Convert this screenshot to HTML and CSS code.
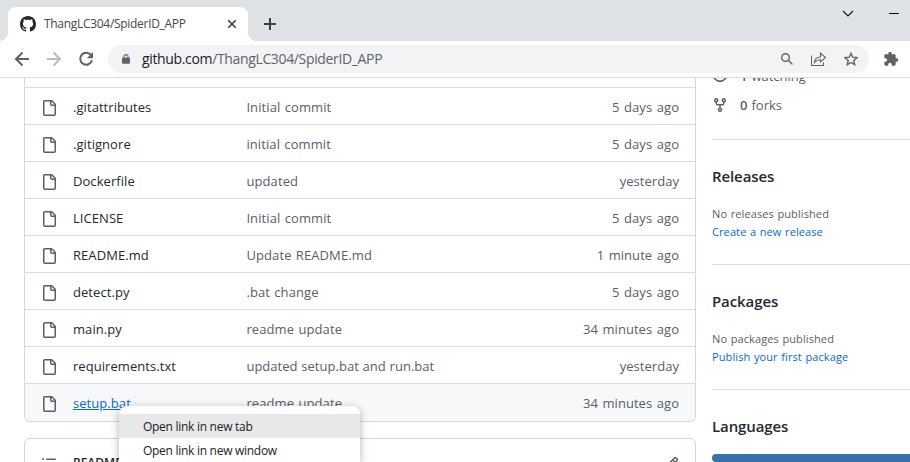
FILE: index.html
```html
<!DOCTYPE html>
<html lang="en">
<head>
<meta charset="utf-8">
<title>ThangLC304/SpiderID_APP</title>
<link rel="stylesheet" href="styles.css">
</head>
<body>
<svg class="defs" aria-hidden="true">
  <symbol id="file" viewBox="0 0 16 16"><path d="M2 1.75C2 .784 2.784 0 3.75 0h6.586c.464 0 .909.184 1.237.513l2.914 2.914c.329.328.513.773.513 1.237v9.586A1.75 1.75 0 0 1 13.25 16h-9.5A1.75 1.75 0 0 1 2 14.25Zm1.75-.25a.25.25 0 0 0-.25.25v12.5c0 .138.112.25.25.25h9.5a.25.25 0 0 0 .25-.25V6h-2.75A1.75 1.75 0 0 1 9 4.25V1.5Zm6.75.062V4.25c0 .138.112.25.25.25h2.688l-.011-.013-2.914-2.914-.013-.011Z"/></symbol>
</svg>
<header class="tabstrip">
  <div class="tab">
    <svg class="mark" viewBox="0 0 16 16"><path d="M8 0c4.42 0 8 3.58 8 8a8.013 8.013 0 0 1-5.45 7.59c-.4.08-.55-.17-.55-.38 0-.27.01-1.13.01-2.2 0-.75-.25-1.23-.54-1.48 1.78-.2 3.65-.88 3.65-3.95 0-.88-.31-1.59-.82-2.15.08-.2.36-1.02-.08-2.12 0 0-.67-.22-2.2.82-.64-.18-1.32-.27-2-.27-.68 0-1.36.09-2 .27-1.53-1.03-2.2-.82-2.2-.82-.44 1.1-.16 1.92-.08 2.12-.51.56-.82 1.28-.82 2.15 0 3.06 1.86 3.75 3.64 3.95-.23.2-.44.55-.51 1.07-.46.21-1.61.55-2.33-.66-.15-.24-.6-.83-1.23-.82-.67.01-.27.38.01.53.34.19.73.9.82 1.13.16.45.68 1.31 2.69.94 0 .67.01 1.3.01 1.49 0 .21-.15.45-.55.38A7.995 7.995 0 0 1 0 8c0-4.42 3.58-8 8-8Z"/></svg>
    <span class="tab-title">ThangLC304/SpiderID_APP</span>
    <svg class="close" viewBox="0 0 10 10"><path d="M1.2 1.2l7.6 7.6M8.8 1.2L1.2 8.8"/></svg>
  </div>
  <svg class="plus" viewBox="0 0 12 12"><path d="M6 0v12M0 6h12"/></svg>
  <div class="window-buttons">
    <svg class="chevron" viewBox="0 0 12 8"><path d="M1 1l5 5 5-5"/></svg>
    <svg class="minimize" viewBox="0 0 10 1"><path d="M0 .5h10"/></svg>
  </div>
</header>
<nav class="toolbar">
  <svg class="nav" viewBox="0 0 16 16"><path d="M15 8H2M8.500 1.500L2 8l6.500 6.500"/></svg>
  <svg class="nav off" viewBox="0 0 16 16"><path d="M1 8h13M7.500 1.500L14 8l-6.500 6.500"/></svg>
  <svg class="nav" viewBox="0 0 16 16"><path d="M13.300 4.500A6 6 0 1 0 14 9.300"/><path class="solid" d="M15 1v6.200H8.800z"/></svg>
  <div class="omnibox">
    <svg class="lock" viewBox="0 0 10 12"><path d="M1 4h8q1 0 1 1v6q0 1-1 1H1q-1 0-1-1V5q0-1 1-1z"/><path class="shackle" d="M2.500 4.500V3a2.500 2.400 0 0 1 5 0v1.500"/></svg>
    <span class="url"><b>github.com</b>/ThangLC304/SpiderID_APP</span>
    <svg class="search" viewBox="0 0 12 12"><circle cx="4.500" cy="4.500" r="3.800"/><path d="M7.300 7.300l4.200 4.200"/></svg>
    <svg class="share" viewBox="0 0 16 14"><path d="M.5 3.500v10h12v-3M3.500 10.500c.2-3.500 2.500-5.500 6-5.500V1.200l5 4.300-5 4.300V7.800c-3 0-4.500.8-6 2.700z"/></svg>
    <svg class="star" viewBox="0 0 14 14"><path d="M7 1.300l1.700 3.900 4.300.4-3.200 2.900.9 4.200L7 10.500l-3.700 2.200.9-4.200L1 5.600l4.300-.4z"/></svg>
  </div>
  <svg class="puzzle" viewBox="0 0 24 24"><path d="M20.500 11H19V7c0-1.100-.9-2-2-2h-4V3.500a2.500 2.500 0 0 0-5 0V5H4c-1.100 0-2 .9-2 2v3.800h1.500a2.700 2.700 0 0 1 0 5.400H2V20c0 1.100.9 2 2 2h3.800v-1.500a2.700 2.700 0 0 1 5.400 0V22H17c1.100 0 2-.9 2-2v-4h1.500a2.500 2.500 0 0 0 0-5z"/></svg>
</nav>
<div class="page">
  <main>
    <div class="files">
      <div class="row cut"></div>
      <div class="row"><svg class="file"><use href="#file"/></svg><a>.gitattributes</a><span class="msg">Initial commit</span><time>5 days ago</time></div>
      <div class="row"><svg class="file"><use href="#file"/></svg><a>.gitignore</a><span class="msg">initial commit</span><time>5 days ago</time></div>
      <div class="row"><svg class="file"><use href="#file"/></svg><a>Dockerfile</a><span class="msg">updated</span><time>yesterday</time></div>
      <div class="row"><svg class="file"><use href="#file"/></svg><a>LICENSE</a><span class="msg">Initial commit</span><time>5 days ago</time></div>
      <div class="row"><svg class="file"><use href="#file"/></svg><a>README.md</a><span class="msg">Update README.md</span><time>1 minute ago</time></div>
      <div class="row"><svg class="file"><use href="#file"/></svg><a>detect.py</a><span class="msg">.bat change</span><time>5 days ago</time></div>
      <div class="row"><svg class="file"><use href="#file"/></svg><a>main.py</a><span class="msg">readme update</span><time>34 minutes ago</time></div>
      <div class="row"><svg class="file"><use href="#file"/></svg><a>requirements.txt</a><span class="msg tight">updated setup.bat and run.bat</span><time>yesterday</time></div>
      <div class="row hover"><svg class="file"><use href="#file"/></svg><a>setup.bat</a><span class="msg">readme update</span><time>34 minutes ago</time></div>
    </div>
    <div class="readme">
      <svg class="list" viewBox="0 0 16 16"><path d="M5.750 2.500h8.500a.75.75 0 0 1 0 1.500h-8.500a.75.75 0 0 1 0-1.500Zm0 5h8.500a.75.75 0 0 1 0 1.500h-8.500a.75.75 0 0 1 0-1.500Zm0 5h8.500a.75.75 0 0 1 0 1.500h-8.500a.75.75 0 0 1 0-1.500ZM2 14a1 1 0 1 1 0-2 1 1 0 0 1 0 2Zm1-6a1 1 0 1 1-2 0 1 1 0 0 1 2 0ZM2 4a1 1 0 1 1 0-2 1 1 0 0 1 0 2Z"/></svg>
      <b>README.md</b>
      <svg class="pencil" viewBox="0 0 16 16"><path d="M11.013 1.427a1.750 1.750 0 0 1 2.474 0l1.086 1.086a1.750 1.750 0 0 1 0 2.474l-8.610 8.610c-.21.21-.47.364-.756.445l-3.251.93a.75.75 0 0 1-.927-.928l.929-3.250c.081-.286.235-.547.445-.758l8.610-8.610Zm.176 4.823L9.750 4.810l-6.286 6.287a.253.253 0 0 0-.064.108l-.558 1.953 1.953-.558a.253.253 0 0 0 .108-.064Zm1.238-3.763a.25.25 0 0 0-.354 0L10.811 3.750l1.439 1.440 1.263-1.263a.25.25 0 0 0 0-.354Z"/></svg>
    </div>
  </main>
  <aside>
    <section class="stats">
      <div class="stat"><svg viewBox="0 0 16 16"><path d="M8 2c1.981 0 3.671.992 4.933 2.078 1.270 1.091 2.187 2.345 2.637 3.023a1.620 1.620 0 0 1 0 1.798c-.45.678-1.367 1.932-2.637 3.023C11.670 13.008 9.981 14 8 14s-3.670-.992-4.933-2.078C1.797 10.830.88 9.576.43 8.898a1.620 1.620 0 0 1 0-1.798c.45-.677 1.367-1.931 2.637-3.022C4.330 2.992 6.019 2 8 2ZM1.679 7.932a.12.12 0 0 0 0 .136c.411.622 1.241 1.750 2.366 2.717C5.176 11.758 6.527 12.500 8 12.500s2.825-.742 3.955-1.715c1.124-.967 1.954-2.096 2.366-2.717a.12.12 0 0 0 0-.136c-.412-.621-1.242-1.750-2.366-2.717C10.824 4.242 9.473 3.500 8 3.500s-2.825.742-3.955 1.715c-1.124.967-1.954 2.096-2.366 2.717ZM8 10a2 2 0 1 1 0-4 2 2 0 0 1 0 4Z"/></svg><b>1</b><span>watching</span></div>
      <div class="stat"><svg viewBox="0 0 16 16"><path d="M5 5.372v.878c0 .414.336.75.75.75h4.500a.75.75 0 0 0 .75-.75v-.878a2.250 2.250 0 1 1 1.500 0v.878a2.250 2.250 0 0 1-2.250 2.250h-1.500v2.128a2.251 2.251 0 1 1-1.500 0V8.500h-1.500A2.250 2.250 0 0 1 3.500 6.250v-.878a2.250 2.250 0 1 1 1.500 0ZM5 3.250a.75.75 0 1 0-1.500 0 .75.75 0 0 0 1.500 0Zm6.750.75a.75.75 0 1 0 0-1.500.75.75 0 0 0 0 1.500Zm-3 8.750a.75.75 0 1 0-1.500 0 .75.75 0 0 0 1.500 0Z"/></svg><b>0</b><span>forks</span></div>
    </section>
    <section class="block"><h2>Releases</h2><p>No releases published</p><a>Create a new release</a></section>
    <section class="block"><h2>Packages</h2><p>No packages published</p><a>Publish your first package</a></section>
    <section class="block last"><h2>Languages</h2><div class="bar"></div></section>
  </aside>
</div>
<div class="menu">
  <div class="item active">Open link in new tab</div>
  <div class="item">Open link in new window</div>
</div>
</body>
</html>
```
FILE: styles.css
```css
* { box-sizing: border-box; }
body {
  margin: 0;
  width: 910px;
  height: 462px;
  overflow: hidden;
  display: flex;
  flex-direction: column;
  background: #fff;
  color: #24292f;
  font: 13px/20px "Open Sans", "Noto Sans", sans-serif;
  white-space: nowrap;
}
svg { flex: none; display: block; }
.defs { position: absolute; width: 0; height: 0; }

.tabstrip { height: 41px; flex: none; background: #dee1e6; display: flex; padding: 7px 0 0 8px; align-items: flex-start; }
.tab { position: relative; width: 240px; height: 34px; background: #fff; border-radius: 8px 8px 0 0; display: flex; align-items: center; padding-left: 12px; }
.tab::before, .tab::after { content: ""; position: absolute; bottom: 0; width: 8px; height: 8px; }
.tab::before { left: -8px; background: radial-gradient(circle at 0 0, transparent 7.500px, #fff 8px); }
.tab::after { right: -8px; background: radial-gradient(circle at 100% 0, transparent 7.500px, #fff 8px); }
.mark { width: 16px; height: 16px; fill: #24292f; }
.tab-title { margin-left: 8px; width: 175px; font-size: 12px; color: #45484d; letter-spacing: -.3px; }
.close { width: 10px; height: 10px; margin-left: 8px; fill: none; stroke: #3c4043; stroke-width: 1.600; }
.plus { width: 12px; height: 12px; margin: 11px 0 0 16px; stroke: #3c4043; stroke-width: 2; }
.window-buttons { margin-left: auto; display: flex; gap: 35px; padding: 3px 11px 0 0; }
.chevron { width: 12px; height: 8px; fill: none; stroke: #111; stroke-width: 1.100; }
.minimize { width: 10px; height: 1px; margin-top: 3px; stroke: #000; stroke-width: 1; }

.toolbar { height: 37px; flex: none; border-bottom: 1px solid #d9dce0; display: flex; align-items: center; padding-left: 14px; }
.nav { width: 16px; height: 16px; margin-right: 16px; fill: none; stroke: #5f6368; stroke-width: 2; }
.nav .solid { fill: #5f6368; stroke: none; }
.off { stroke: #babcbe; }
.omnibox { width: 761px; height: 28px; margin-left: -2px; border-radius: 14px; background: #f1f3f4; display: flex; align-items: center; padding-left: 14px; }
.lock { width: 8px; height: 12px; fill: #5f6368; }
.shackle { fill: none; stroke: #5f6368; stroke-width: 1.400; }
.url { width: 639px; margin-left: 12px; font-size: 14px; color: #5f6368; letter-spacing: -.35px; }
.url b { font-weight: 400; color: #202124; }
.search { width: 12px; height: 12px; fill: none; stroke: #5f6368; stroke-width: 1.400; }
.share { width: 16px; height: 14px; margin-left: 18px; fill: none; stroke: #5f6368; stroke-width: 1.100; }
.star { width: 14px; height: 14px; margin-left: 17px; fill: none; stroke: #5f6368; stroke-width: 1.400; }
.puzzle { width: 16px; height: 16px; margin-left: 14px; fill: #5f6368; }

.page { flex: 1; min-height: 0; overflow: hidden; display: flex; padding-left: 24px; }
main { width: 672px; }
.files { border: 1px solid #d0d7de; border-top: 0; border-radius: 0 0 6px 6px; overflow: hidden; }
.row { height: 37px; border-top: 1px solid #d8dee4; display: flex; align-items: center; padding: 2px 16px 0; }
.row.cut { height: 9px; border: 0; }
.row.hover { height: 38px; padding-bottom: 1px; background: #f6f8fa; }
.file { width: 16px; height: 16px; fill: #57606a; margin-top: 2px; }
.row a { width: 173px; margin-left: 16px; color: #24292f; letter-spacing: .06px; }
.row.hover a { color: #0969da; text-decoration: underline; }
.msg, time { color: #57606a; }
.msg { letter-spacing: .1px; word-spacing: .8px; margin-left: .4px; }
.msg.tight { letter-spacing: .02px; word-spacing: .4px; }
time { margin-left: auto; letter-spacing: .04px; word-spacing: 1.200px; }
.readme { height: 60px; margin-top: 16px; border: 1px solid #d0d7de; border-radius: 6px; padding: 15px 16px; display: flex; align-items: flex-start; }
.readme b { margin: -1px auto 0 16px; font-weight: 600; font-size: 12px; }
.list, .pencil { width: 16px; height: 16px; margin-top: 2px; fill: #57606a; }

aside { margin-left: 16px; flex: 1; }
.stats { margin-top: -12px; height: 73px; }
.stat { display: flex; align-items: center; height: 20px; margin-bottom: 9px; color: #57606a; }
.stat svg { width: 16px; height: 16px; fill: #57606a; }
.stat b { margin: 0 4px 0 12px; font-weight: 600; }
.block { height: 125px; border-top: 1px solid #d8dee4; padding-top: 24px; }
.block.last { height: 73px; }
h2 { margin: 0; font-size: 15px; line-height: 24px; font-weight: 600; letter-spacing: -.1px; }
.block p, .block a { display: block; margin: 0; font-size: 11px; line-height: 18px; color: #57606a; letter-spacing: .1px; word-spacing: .6px; }
.block p { margin-top: 17px; }
.block a { color: #0969da; }
.bar { height: 8px; margin-top: 16px; background: #3572a5; border-radius: 6px 0 0 6px; }

.menu { position: absolute; left: 119px; top: 406px; width: 241px; height: 56px; padding-top: 8px; background: #fff; border-radius: 8px 8px 0 0; box-shadow: 0 2px 8px rgba(0,0,0,.3); color: #202124; font-size: 12px; letter-spacing: -.28px; }
.item { height: 24px; line-height: 26px; padding-left: 24px; }
.active { background: #e8e8e9; }
```
